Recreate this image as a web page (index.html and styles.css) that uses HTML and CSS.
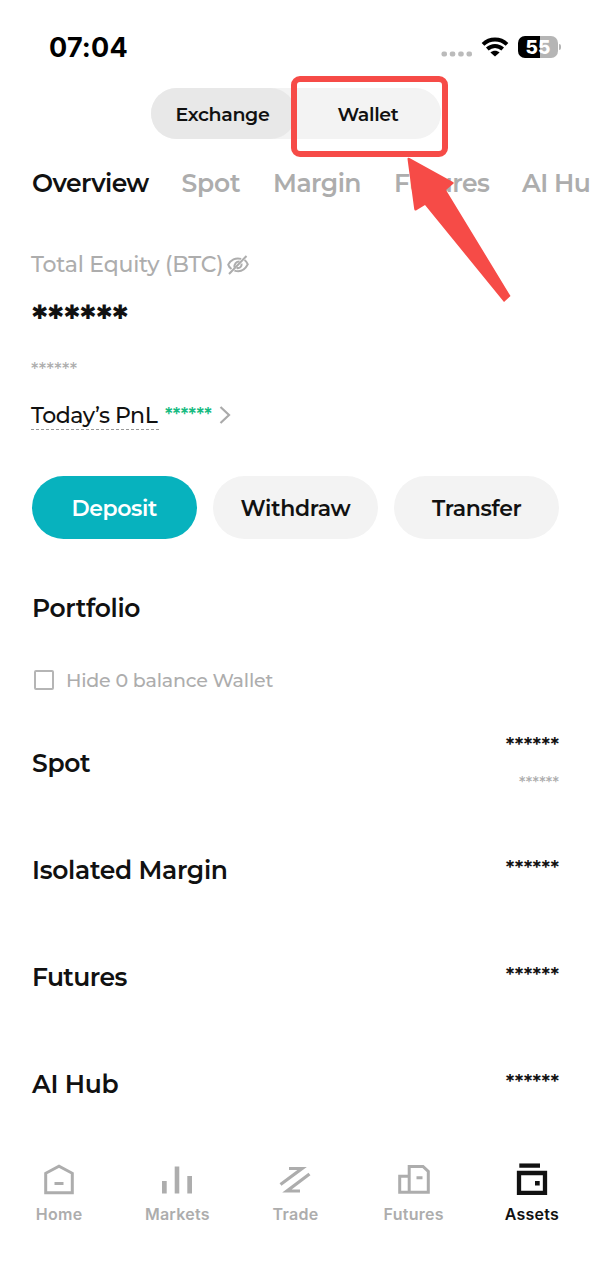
FILE: index.html
```html
<!DOCTYPE html>
<html lang="en">
<head>
<meta charset="utf-8">
<title>Assets</title>
<link rel="stylesheet" href="styles.css">
</head>
<body>
<div class="screen">
  <header class="status">
    <span class="time">07:04</span>
    <div class="status-icons">
      <svg class="dots" width="32" height="6" viewBox="0 0 32 6" fill="#bbb"><rect x="0.5" y="0.5" width="5.5" height="5" rx="2"/><rect x="8.8" y="0.5" width="5.5" height="5" rx="2"/><rect x="17.2" y="0.5" width="5.5" height="5" rx="2"/><rect x="25.5" y="0.5" width="5.5" height="5" rx="2"/></svg>
      <svg class="wifi" width="28" height="20" viewBox="0 0 28 20" fill="none" stroke="#000" stroke-width="3.9"><path d="M2 7.3C8.8 0.8 19.2 0.8 26 7.3"/><path d="M6.3 12C10.8 7.9 17.2 7.9 21.7 12"/><path d="M14 19.6L9.4 15.5C12.1 13 15.9 13 18.6 15.5Z" fill="#000" stroke="none"/></svg>
      <div class="battery"><span class="level">55</span><i class="cap"></i></div>
    </div>
  </header>

  <div class="switcher">
    <button class="segment active">Exchange</button>
    <button class="segment">Wallet</button>
  </div>

  <nav class="tabs">
    <a class="tab current w-overview">Overview</a><a class="tab w-spot">Spot</a><a class="tab w-margin">Margin</a><a class="tab w-futures">Futures</a><a class="tab">AI Hub</a>
  </nav>

  <section class="equity">
    <div class="equity-title"><span>Total Equity (BTC)</span>
      <svg width="22" height="20" viewBox="0 0 22 20" fill="none" stroke="#adadad" stroke-width="2"><path d="M14.2 3.9C8.6 2.2 3.6 5 1.2 9.6C1.8 11.5 3 13 4.5 14"/><path d="M17.5 5C19 6 20.2 7.6 20.8 9.3C17.6 15.5 12.6 17.3 7.4 15.6"/><path d="M12.5 6.4C9.4 6.2 7 9 7.4 12.4M14.6 8.6C15 11.8 12.5 13.6 9.6 13"/><path d="M2 19L19.5 1"/></svg>
    </div>
    <div class="balance">******</div>
    <div class="balance-fiat">******</div>
    <div class="pnl"><span class="pnl-label">Today’s PnL</span><span class="pnl-value">******</span>
      <svg width="12" height="18" viewBox="0 0 12 18" fill="none" stroke="#aaa" stroke-width="2.2"><path d="M1.5 1L10 9L1.5 17"/></svg>
    </div>
  </section>

  <div class="actions">
    <button class="action primary">Deposit</button>
    <button class="action">Withdraw</button>
    <button class="action">Transfer</button>
  </div>

  <h2 class="heading">Portfolio</h2>
  <label class="hide-zero"><span class="box"></span><span class="hide-label">Hide 0 balance Wallet</span></label>

  <main class="wallets">
    <div class="wallet"><span>Spot</span><div class="values double"><b class="masked">******</b><small class="masked-fiat">******</small></div></div>
    <div class="wallet"><span>Isolated Margin</span><div class="values"><b class="masked">******</b></div></div>
    <div class="wallet"><span class="tight">Futures</span><div class="values"><b class="masked">******</b></div></div>
    <div class="wallet"><span>AI Hub</span><div class="values"><b class="masked">******</b></div></div>
  </main>

  <nav class="tabbar">
    <a class="item"><svg width="36" height="36" viewBox="0 0 36 36" fill="none" stroke="#adadad" stroke-width="3"><path d="M4.7 31.7V12.3L18 5.2L31.3 12.3V31.7Z"/><path d="M13.5 22.5H22.5"/></svg><span>Home</span></a>
    <a class="item"><svg width="36" height="36" viewBox="0 0 36 36" fill="#adadad"><path d="M3 20H7.7V32.5H3ZM15.7 5.5H20.3V32.5H15.7ZM28.3 15H33V32.5H28.3Z"/></svg><span>Markets</span></a>
    <a class="item"><svg width="36" height="36" viewBox="0 0 36 36" fill="none" stroke="#adadad" stroke-width="3.2"><path d="M3.5 23.5L25 7.5H12M32.5 13L10 30H23"/></svg><span>Trade</span></a>
    <a class="item"><svg width="36" height="36" viewBox="0 0 36 36" fill="none" stroke="#adadad" stroke-width="3"><path d="M13.2 15.2H3.7V31.2H32.3V10.5L27 5.5H13.2V31.2M20.5 16.8H26.5"/></svg><span>Futures</span></a>
    <a class="item selected"><svg width="36" height="36" viewBox="0 0 36 36" fill="none" stroke="#111" stroke-width="4.3"><path d="M5.3 4.6H26"/><path d="M5 12H31V31.8H5Z"/><path d="M21 20H25.7V24.5H21Z" fill="#111" stroke="none"/></svg><span>Assets</span></a>
  </nav>

  <div class="highlight"></div>
  <svg class="arrow" width="108" height="150" viewBox="0 0 108 150"><path d="M0.5 2Q0.5 0 2.5 1L46 25Q47.5 26 46 27L39 33L103.5 139L97 145L18 48L9 53.5Q7.5 54 7.2 52Z" fill="#f64b47"/></svg>
</div>
</body>
</html>
```
FILE: styles.css
```css
* { box-sizing: border-box; }
body { margin: 0; background: #fff; font-family: Montserrat, Inter, "Liberation Sans", sans-serif; color: #111; }
button { border: 0; margin: 0; padding: 0; font: inherit; letter-spacing: inherit; color: inherit; background: none; }
svg { display: block; flex: none; }
.screen { position: relative; width: 591px; height: 1280px; overflow: hidden; white-space: nowrap; }

.status { display: flex; justify-content: space-between; align-items: center; height: 88px; padding: 5px 33px 0 49px; }
.time { padding-top: 2px; font-family: Inter, sans-serif; font-size: 27px; font-weight: 700; letter-spacing: 0.2px; color: #000; }
.status-icons { display: flex; align-items: center; }
.dots { margin-top: 14px; }
.wifi { margin-left: 8px; }
.battery { position: relative; width: 40px; height: 22px; margin-left: 9px; border-radius: 7px; background: linear-gradient(90deg, #000 55%, #b5b5b5 55%); color: #fff; text-align: center; font: 800 19px/23px Inter, sans-serif; }
.cap { position: absolute; right: -3px; top: 8px; width: 2px; height: 6px; border-radius: 0 2px 2px 0; background: #b5b5b5; }

.switcher { display: flex; width: 290px; height: 51px; margin-left: 151px; border-radius: 26px; background: #f3f3f3; font-size: 19px; font-weight: 600; letter-spacing: -0.35px; }
.segment { width: 145px; height: 51px; padding: 2px 1px 0 0; border-radius: 26px; }
.segment.active { padding-right: 2px; background: #e8e8e8; }

.tabs { display: flex; align-items: center; height: 88px; padding-left: 32px; font-size: 25px; font-weight: 600; letter-spacing: -0.5px; color: #adadad; }
.tab { flex: none; }
.tab.current { letter-spacing: -0.6px; color: #111; }
.w-overview { width: 149.5px; }
.w-spot { width: 91.5px; letter-spacing: -0.2px; }
.w-margin { width: 121px; }
.w-futures { width: 128px; }

.equity { height: 249px; padding-left: 31px; }
.equity-title { display: flex; align-items: center; gap: 3px; height: 75px; font-size: 22px; font-weight: 500; letter-spacing: -0.2px; color: #adadad; }
.balance { height: 37px; padding-left: 1px; line-height: 36px; font-size: 35.5px; font-weight: 700; }
.balance-fiat { height: 60px; line-height: 61px; font-size: 18.5px; font-weight: 500; color: #adadad; }
.pnl { display: flex; align-items: center; height: 32px; font-size: 22px; font-weight: 500; }
.pnl-label { width: 128px; height: 30px; line-height: 32px; letter-spacing: -0.45px; border-bottom: 1px dashed #999; }
.pnl-value { width: 60px; padding-left: 6px; font-size: 18px; font-weight: 600; color: #19bb82; }

.actions { display: flex; gap: 16px; padding: 0 31.5px; }
.action { flex: 1; height: 63px; padding-top: 1px; border-radius: 32px; background: #f3f3f3; font-size: 22px; font-weight: 600; letter-spacing: -0.3px; }
.action.primary { background: #07b2be; color: #fff; letter-spacing: -0.4px; }

.heading { margin: 0; height: 138px; padding-left: 32px; line-height: 138px; font-size: 25px; font-weight: 600; letter-spacing: -0.35px; }
.hide-zero { display: flex; align-items: center; gap: 12px; height: 33px; margin-top: -14px; padding-left: 34px; font-size: 19px; font-weight: 500; letter-spacing: -0.2px; color: #adadad; }
.hide-label { padding-top: 2px; }
.box { width: 20px; height: 20px; border: 2px solid #b5b5b5; border-radius: 2px; }

.wallets { padding: 13px 32px 0; }
.wallet { display: flex; justify-content: space-between; align-items: center; height: 107.2px; font-size: 25px; font-weight: 600; letter-spacing: -0.3px; }
.tight { letter-spacing: -0.6px; }
.values { display: flex; flex-direction: column; align-items: flex-end; padding-bottom: 4px; letter-spacing: 0; }
.values.double { padding: 2px 0 0; }
.masked { height: 38px; line-height: 38px; font-size: 20.5px; font-weight: 600; }
.masked-fiat { height: 38px; line-height: 38px; font-size: 16px; font-weight: 500; color: #adadad; }

.tabbar { display: flex; margin-top: 23.7px; }
.item { width: 118.2px; display: flex; flex-direction: column; align-items: center; gap: 6px; color: #adadad; font: 600 16px/22px Inter, sans-serif; letter-spacing: 0.25px; }
.item.selected { color: #111; }

.highlight { position: absolute; left: 291px; top: 76px; width: 157px; height: 81px; border: 6px solid #f64b47; border-radius: 9px; }
.arrow { position: absolute; left: 407px; top: 157px; }
```
